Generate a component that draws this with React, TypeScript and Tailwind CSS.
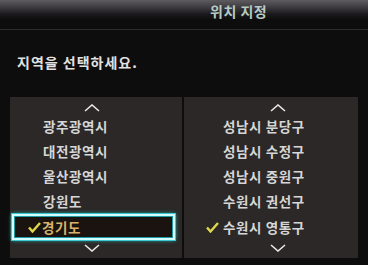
const font = { fontFamily: '"Noto Sans CJK KR", "Noto Sans", sans-serif' };

const left = ["광주광역시", "대전광역시", "울산광역시", "강원도"];
const right = ["성남시 분당구", "성남시 수정구", "성남시 중원구", "수원시 권선구"];

const Chevron = ({ down }: { down?: boolean }) => (
  <svg width="16" height="8" viewBox="0 0 16 8" className="text-[#e8e8e8]">
    <polyline
      points={down ? "1,1 8,7 15,1" : "1,7 8,1 15,7"}
      fill="none"
      stroke="currentColor"
      strokeWidth="1.6"
    />
  </svg>
);

const Check = () => (
  <svg width="13" height="11" viewBox="0 0 13 11" className="text-[#e0d848]">
    <polyline points="1,5.5 4.5,9.5 12,1" fill="none" stroke="currentColor" strokeWidth="2.4" />
  </svg>
);

const App = () => {
  return (
    <div
      className="w-[368px] h-[265px] bg-[#0e0d0e] overflow-hidden flex flex-col"
      style={font}
    >
      <div className="h-[30px] shrink-0 border-b border-[#2c2c2e] bg-[linear-gradient(to_bottom,#5e5c60_0px,#3a383c_8px,#1a191b_14px,#0e0d0e_20px)]">
        <div className="pl-[210px] pt-[2px] text-[14px] font-bold tracking-[0.5px] text-[#b6cbc4] leading-[18px]">
          위치 지정
        </div>
      </div>

      <div className="pl-[17px] mt-[22px] text-[14px] tracking-[1px] font-semibold text-[#e2e2e2] leading-[20px]">
        지역을 선택하세요.
      </div>

      <div className="mt-[25px] flex gap-[2px] pl-[10px]">
        <div className="w-[172px] h-[161px] bg-[#2b2827] flex flex-col pt-[5px]">
          <div className="h-[12px] flex items-center justify-center pr-[8px]">
            <Chevron />
          </div>
          {left.map((t) => (
            <div
              key={t}
              className="h-[25px] flex items-center pl-[33px] text-[13.5px] font-semibold tracking-[0.6px] text-[#d6d6d6]"
            >
              {t}
            </div>
          ))}
          <div className="h-[26px] ml-[2px] w-[163px] border-2 border-[#d4ffff] shadow-[0_0_0_1px_#39c8d0,0_0_4px_#2fd6e0,inset_0_0_0_1px_#1e9aa4] bg-[#1a130f] flex items-center pl-[14px] gap-[1px]">
            <Check />
            <span className="text-[13.5px] font-semibold tracking-[0.6px] text-[#d9b36c]">경기도</span>
          </div>
          <div className="h-[16px] flex items-center justify-center pr-[8px]">
            <Chevron down />
          </div>
        </div>

        <div className="w-[174px] h-[161px] bg-[#2b2827] flex flex-col pt-[5px]">
          <div className="h-[12px] flex items-center justify-center pl-[14px]">
            <Chevron />
          </div>
          {right.map((t) => (
            <div
              key={t}
              className="h-[25px] flex items-center pl-[39px] text-[13.5px] font-semibold tracking-[0.6px] text-[#d6d6d6] whitespace-pre"
            >
              {t}
            </div>
          ))}
          <div className="h-[26px] flex items-center pl-[22px] gap-[4px] text-[13.5px] font-semibold tracking-[0.6px] text-[#d6d6d6] whitespace-pre">
            <Check />
            <span>수원시 영통구</span>
          </div>
          <div className="h-[16px] flex items-center justify-center pl-[14px]">
            <Chevron down />
          </div>
        </div>
      </div>
    </div>
  );
};

export default App;
